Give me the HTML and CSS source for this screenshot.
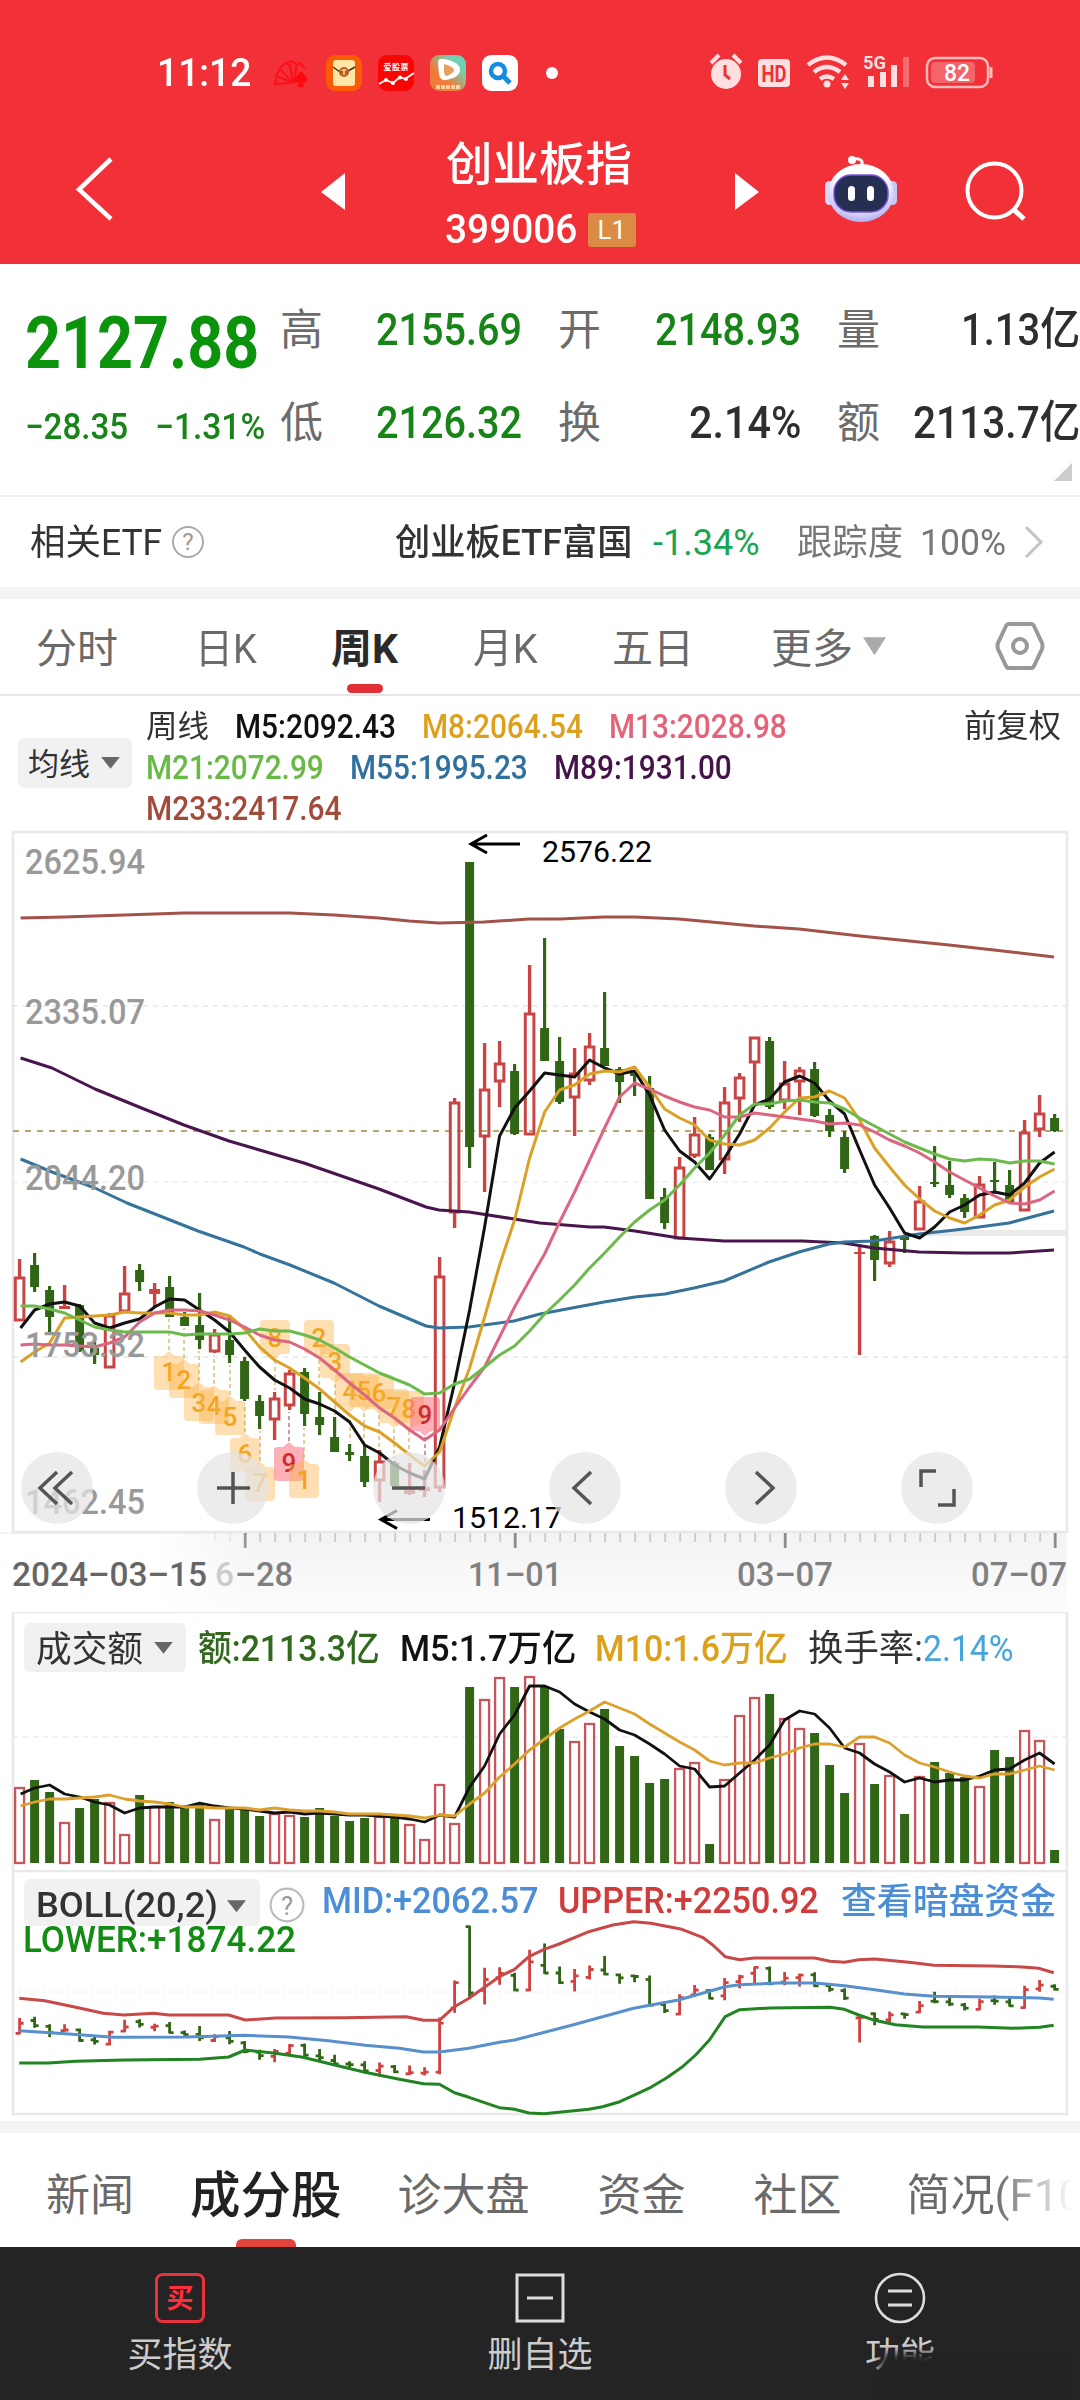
FILE: index.html
```html
<!DOCTYPE html>
<html lang="zh-CN">
<head>
<meta charset="utf-8">
<title>创业板指 399006</title>
<link rel="stylesheet" href="styles.css">
</head>
<body>
<div class="app">
  <header class="top">
    <div class="status">
      <span class="clock" data-w="94">11:12</span>
      <svg class="apps" width="290" height="40" viewBox="270 53 290 40">
        <g fill="none" stroke="#fb1119" stroke-width="2.200" stroke-linejoin="round">
          <path d="M293 83L275 84l1-6M293 83L276 76l4-7 13 14M280 68l5-5 5 2 3 18 4-18-5-4-6 2M297 65l3-2 5 5"/>
        </g>
        <path d="M301 71c6 6 8 9 5 11q-2 2-4 0l2 5h-7l2-5q-3 2-5 0c-2-3 2-5 7-11z" fill="#fa0a10"/>
        <rect x="326" y="55" width="36" height="36" rx="9" fill="#fb5a08"/>
        <rect x="333" y="60" width="22" height="26" rx="3" fill="#ffe5a6"/>
        <path d="M333 67l10 7 12-7" fill="none" stroke="#4c3113" stroke-width="1.500"/>
        <circle cx="344" cy="72" r="5" fill="#b5602a"/><path d="M341.500 70h5M344 70v5" stroke="#ffd07a" stroke-width="1.500"/>
        <rect x="378" y="55" width="36" height="36" rx="9" fill="#f80606"/>
        <text x="396" y="69.500" class="tiny" text-anchor="middle" textLength="25">爱股票</text>
        <path d="M379 84l7-4 7 3 7-6 5 2 9-6" fill="none" stroke="#fff" stroke-width="1.800"/>
        <g fill="#fff"><circle cx="386" cy="80" r="2"/><circle cx="393" cy="83" r="2"/><circle cx="400" cy="77.500" r="2"/><circle cx="406" cy="79" r="2"/></g>
        <defs><linearGradient id="play" x1="0" y1="1" x2="1" y2="0"><stop offset=".35" stop-color="#f27938"/><stop offset=".75" stop-color="#6fd1b4"/></linearGradient></defs>
        <rect x="430" y="55" width="36" height="36" rx="9" fill="url(#play)"/>
        <path d="M438 63q0-5 6-4 16 3 16 11 0 7-14 10-6 1-7-6z" fill="#fff"/>
        <path d="M444 64q10 3 10 6 0 3-7 6-3 0-3-5z" fill="#e5a060"/>
        <path d="M436 87h25" stroke="#ffd0a0" stroke-width="4" stroke-dasharray="4 1"/>
        <rect x="482" y="55" width="36" height="36" rx="9" fill="#fff"/>
        <circle cx="498" cy="71" r="7" fill="none" stroke="#168be0" stroke-width="4.500"/>
        <path d="M503 76l7 7" stroke="#168be0" stroke-width="5"/>
        <circle cx="552" cy="73" r="6" fill="#fff"/>
      </svg>
      <svg class="sys" width="290" height="40" viewBox="706 53 290 40">
        <g fill="#ffdfe0">
          <circle cx="726" cy="74" r="15"/>
          <path d="M711 63l8-8M741 63l-8-8" stroke="#ffdfe0" stroke-width="4"/>
          <path d="M725 65v10l5 4" fill="none" stroke="#f13037" stroke-width="3"/>
          <rect x="758" y="59" width="32" height="28" rx="4"/>
          <text x="774" y="81.500" class="hd" text-anchor="middle" textLength="25" lengthAdjust="spacingAndGlyphs">HD</text>
          <g fill="none" stroke="#ffdfe0" stroke-width="4.500"><path d="M808 65q19-15 38 0M814 72q13-10 26 0M820 79q7-5 14 0"/></g>
          <circle cx="827" cy="84" r="3.500"/>
          <path d="M841 80l4-6 4 6zM841 83l4 6 4-6z"/>
          <text x="863" y="69" class="g5" textLength="23" lengthAdjust="spacingAndGlyphs">5G</text>
          <rect x="868" y="76" width="6" height="11"/><rect x="880" y="72" width="6" height="15"/><rect x="891" y="65" width="6" height="22"/><rect x="903" y="57" width="6" height="30" opacity=".35"/>
          <rect x="927" y="58" width="61" height="29" rx="8" fill="none" stroke="#ffb9bb" stroke-width="2.500"/>
          <rect x="931" y="62" width="44" height="21" rx="4" opacity=".3"/>
          <path d="M991 67v11" stroke="#ffb9bb" stroke-width="3"/>
          <text x="944" y="81" class="bat" textLength="26" lengthAdjust="spacingAndGlyphs">82</text>
        </g>
      </svg>
    </div>
    <div class="nav">
      <svg class="back" width="40" height="68" viewBox="75 155 40 68"><path d="M111 159L79 189.500 111 219" fill="none" stroke="#fff" stroke-width="4.500"/></svg>
      <svg class="prev" width="25" height="38" viewBox="0 0 25 38"><path d="M0 19L24 0V37z" fill="#fff"/></svg>
      <div class="title">
        <h1 data-w="186">创业板指</h1>
        <div class="code"><span data-w="132">399006</span><i class="badge"><b data-w="29">L1</b></i></div>
      </div>
      <svg class="next" width="25" height="38" viewBox="0 0 25 38"><path d="M24 19L0 0V37z" fill="#fff"/></svg>
      <svg class="robot" width="74" height="70" viewBox="824 154 74 70">
        <defs><radialGradient id="head" cx=".5" cy=".35" r=".62"><stop offset=".6" stop-color="#fff"/><stop offset="1" stop-color="#b9b6f2"/></radialGradient></defs>
        <path d="M861 166c3-5 0-8-8-7" fill="none" stroke="#fff" stroke-width="3"/><circle cx="852" cy="160" r="4" fill="#fff"/>
        <rect x="825" y="181" width="9" height="24" rx="4.500" fill="#d5d9fb"/><rect x="888" y="181" width="9" height="24" rx="4.500" fill="#c5c9fa"/>
        <ellipse cx="861" cy="193" rx="33" ry="29" fill="url(#head)"/>
        <rect x="834" y="175" width="54" height="37" rx="17" fill="#242f52" stroke="#7a52e0" stroke-width="1.500"/>
        <rect x="848" y="186" width="7" height="15" rx="3.500" fill="#fff"/><rect x="867" y="186" width="7" height="15" rx="3.500" fill="#fff"/>
      </svg>
      <svg class="search" width="62" height="62" viewBox="965 160 62 62"><circle cx="994.500" cy="190.500" r="27" fill="none" stroke="#fff" stroke-width="4"/><path d="M1013 209l11 10" stroke="#fff" stroke-width="5"/></svg>
    </div>
  </header>

  <section class="quote">
    <div class="last">
      <div class="price"><span data-w="234">2127.88</span></div>
      <div class="chg"><span data-w="103">−28.35</span><span data-w="110">−1.31%</span></div>
    </div>
    <dl class="stats">
      <dt>高</dt><dd class="dn"><span data-w="146">2155.69</span></dd>
      <dt>开</dt><dd class="dn"><span data-w="146">2148.93</span></dd>
      <dt>量</dt><dd><span data-w="119">1.13亿</span></dd>
      <dt>低</dt><dd class="dn"><span data-w="146">2126.32</span></dd>
      <dt>换</dt><dd><span data-w="112">2.14%</span></dd>
      <dt>额</dt><dd><span data-w="167">2113.7亿</span></dd>
    </dl>
    <i class="corner"></i>
  </section>

  <section class="etf">
    <span data-w="132">相关ETF</span>
    <svg class="help" width="34" height="34" viewBox="0 0 34 34"><circle cx="17" cy="17" r="15" fill="none" stroke="#aaa" stroke-width="2"/><text x="17" y="25" text-anchor="middle" class="q">?</text></svg>
    <strong data-w="237">创业板ETF富国</strong>
    <span class="pct" data-w="107">-1.34%</span>
    <span class="track" data-w="106">跟踪度</span>
    <span class="full" data-w="86">100%</span>
    <svg class="go" width="20" height="34" viewBox="0 0 20 34"><path d="M2 2l15 15L2 32" fill="none" stroke="#c4c4c4" stroke-width="3"/></svg>
  </section>

  <nav class="periods">
    <span>分时</span><span data-w="62">日K</span><b data-w="67">周K</b><span data-w="65">月K</span><span>五日</span><span class="more">更多</span>
    <i class="tri lite"></i>
    <svg width="50" height="48" viewBox="0 0 50 48"><path d="M14 2h22q2 0 3 2l8 17q1 3 0 6l-8 17q-1 2-3 2H14q-2 0-3-2L3 27q-1-3 0-6l8-17q1-2 3-2z" fill="none" stroke="#999" stroke-width="4"/><circle cx="25" cy="24" r="7" fill="none" stroke="#999" stroke-width="4"/></svg>
  </nav>

  <section class="legend">
    <div class="pick"><span data-w="62">均线</span><i class="tri"></i></div>
    <div class="mas">
      <div><span data-w="63">周线</span><span class="k" data-w="161">M5:2092.43</span><span class="o" data-w="161">M8:2064.54</span><span class="p" data-w="178">M13:2028.98</span></div>
      <div><span class="g" data-w="178">M21:2072.99</span><span class="b" data-w="178">M55:1995.23</span><span class="v" data-w="178">M89:1931.00</span></div>
      <div><span class="r" data-w="196">M233:2417.64</span></div>
    </div>
    <span class="adj" data-w="97">前复权</span>
  </section>

  <section class="kline">
    <svg id="kline" width="1080" height="782" viewBox="0 830 1080 782"></svg>
    <div class="tools">
      <button><svg viewBox="0 0 72 72"><path d="M36 20L19 36l17 16M51 20L34 36l17 16"/></svg></button>
      <button><svg viewBox="0 0 72 72"><path d="M36 20v32M20 36h33"/></svg></button>
      <button><svg viewBox="0 0 72 72"><path d="M19 36h33"/></svg></button>
      <button><svg viewBox="0 0 72 72"><path d="M42 20L25 36l17 16"/></svg></button>
      <button><svg viewBox="0 0 72 72"><path d="M31 20l17 16-17 16"/></svg></button>
      <button><svg viewBox="0 0 72 72"><path d="M20 35V19h15M37 53h16V37"/></svg></button>
    </div>
  </section>

  <section class="panel vol">
    <svg id="vol" class="plot" width="1080" height="258" viewBox="0 1612 1080 258"></svg>
    <div class="phead">
      <div class="pick"><span data-w="107">成交额</span><i class="tri"></i></div>
      <span class="dg" data-w="182">额:2113.3亿</span><span class="k" data-w="176">M5:1.7万亿</span><span class="o" data-w="193">M10:1.6万亿</span><span class="turn"><span data-w="115">换手率:</span><span class="sky" data-w="91">2.14%</span></span>
    </div>
  </section>

  <section class="panel boll">
    <svg id="boll" class="plot" width="1080" height="251" viewBox="0 1870 1080 251"></svg>
    <div class="bhead">
      <div class="pick"><span data-w="182">BOLL(20,2)</span><i class="tri"></i></div>
      <svg class="help" width="36" height="36" viewBox="0 0 34 34"><circle cx="17" cy="17" r="15.500" fill="none" stroke="#bbb" stroke-width="2"/><text x="17" y="26" text-anchor="middle" class="q">?</text></svg>
      <span class="mid" data-w="216">MID:+2062.57</span><span class="up" data-w="261">UPPER:+2250.92</span><span class="mid cn" data-w="215">查看暗盘资金</span>
    </div>
    <div class="low"><span data-w="273">LOWER:+1874.22</span></div>
  </section>

  <nav class="tabs">
    <span>新闻</span><b>成分股</b><span>诊大盘</span><span>资金</span><span>社区</span><span class="fade">简况(F10)</span>
  </nav>

  <footer class="bar">
    <div class="buy"><svg width="50" height="50" viewBox="0 0 50 50"><rect x="1.500" y="1.500" width="47" height="47" rx="6" fill="none" stroke="#e8323c" stroke-width="3"/><text x="25" y="35" text-anchor="middle" class="mai">买</text></svg><span>买指数</span></div>
    <div><svg width="50" height="50" viewBox="0 0 50 50"><path d="M2 2h46v46H2zM12 25h26" fill="none" stroke="#ddd" stroke-width="3"/></svg><span>删自选</span></div>
    <div class="fn"><svg width="52" height="52" viewBox="0 0 52 52"><circle cx="26" cy="26" r="24" fill="none" stroke="#ddd" stroke-width="2.600"/><path d="M14 19h24M14 33h24" stroke="#ddd" stroke-width="3"/></svg><span>功能</span><i class="smudge"></i></div>
  </footer>
</div>
<script src="charts.js"></script>
</body>
</html>
```
FILE: styles.css
```css
* { box-sizing: border-box; }
body { margin: 0; background: #fff; font-family: Roboto, "Noto Sans CJK SC", sans-serif; color: #333; }
.app { width: 1080px; height: 2400px; overflow: hidden; display: flex; flex-direction: column; }
i { font-style: normal; }
svg { display: block; flex: none; }
[data-w] { display: inline-block; white-space: nowrap; }
.squeeze { display: inline-block; transform-origin: 0 50%; white-space: nowrap; }

.top { height: 264px; background: #f13037; color: #fff; }
.status { height: 124px; padding: 53px 84px 0 157px; display: flex; align-items: flex-start; }
.clock { font-size: 38px; line-height: 40px; font-weight: 500; }
.apps { margin-left: 19px; }
.sys { margin-left: auto; }
.tiny { font: 700 8px "Noto Sans CJK SC", sans-serif; fill: #fff; }
.hd { font: 700 23px Roboto, sans-serif; fill: #f13037; }
.g5 { font: 700 18px Roboto, sans-serif; }
.bat { font: 500 24px Roboto, sans-serif; fill: #fff; }
.nav { height: 140px; padding-left: 75px; display: flex; align-items: flex-start; }
.back { margin-top: 31px; }
.prev { margin: 49px 0 0 206px; }
.title { margin: 12px 0 0 100px; width: 190px; }
.title h1 { margin: 0; font-size: 46px; line-height: 56px; font-weight: 500; }
.code { display: flex; align-items: center; gap: 11px; margin: 15px 0 0 -1px; font-size: 40px; line-height: 46px; font-weight: 500; white-space: nowrap; }
.badge { background: #dc8b45; width: 48px; height: 34px; display: flex; justify-content: center; align-items: center; font-size: 26px; line-height: 34px; border-radius: 3px; }
.badge b { font-weight: 400; }
.next { margin: 49px 0 0 99px; }
.robot { margin: 30px 0 0 64px; }
.search { margin: 36px 0 0 67px; }

.quote { height: 233px; display: flex; position: relative; border-bottom: 2px solid #eee; }
.last { width: 281px; padding: 40px 0 0 25px; color: #0c930c; }
.price { font-size: 73px; line-height: 78px; font-weight: 700; }
.chg { display: flex; gap: 27px; margin-top: 24px; font-size: 36px; line-height: 42px; font-weight: 500; color: #178417; }
.stats { margin: 37px 0 0; width: 799px; display: grid; grid-template-columns: 43px 198px 81px 198px 80px 199px; grid-template-rows: 58px 58px; row-gap: 35px; }
.stats dt { font-size: 43px; line-height: 58px; color: #6c6c6c; white-space: nowrap; margin-left: -1px; }
.stats dt:nth-of-type(3n+2) { padding-left: 37px; }
.stats dt:nth-of-type(3n) { padding-left: 37px; }
.stats dd { margin: 0; font-size: 45px; line-height: 58px; font-weight: 500; color: #2e2e2e; text-align: right; }
.stats .dn { color: #178417; }
.corner { position: absolute; right: 8px; bottom: 14px; border-left: 18px solid transparent; border-bottom: 18px solid #ccc; }

.etf { height: 90px; padding: 3px 31px 0 30px; display: flex; align-items: center; font-size: 36px; line-height: 50px; }
.help { margin-left: 9px; margin-top: -3px; }
.q { font: 24px Roboto, sans-serif; fill: #999; }
.etf strong { margin-left: 190px; font-weight: 500; }
.pct { margin-left: 21px; color: #17a552; }
.track { margin-left: 37px; color: #777; }
.full { margin-left: 17px; color: #777; }
.go { margin: -3px 0 0 18px; }

.periods { height: 109px; border-top: 12px solid #f4f4f4; border-bottom: 2px solid #e6e6e6; padding-left: 36px; display: flex; align-items: center; font-size: 41px; line-height: 60px; color: #6a6a6a; }
.periods > span, .periods > b { white-space: nowrap; margin-top: 5px; }
.periods > :nth-child(2) { margin-left: 77px; }
.periods > :nth-child(3) { margin-left: 74px; color: #2a2a2a; font-weight: 700; position: relative; }
.periods > :nth-child(3)::after { content: ""; position: absolute; left: 16px; bottom: -14px; width: 36px; height: 9px; border-radius: 5px; background: #e03036; }
.periods > :nth-child(4) { margin-left: 75px; }
.periods > :nth-child(5) { margin-left: 74px; }
.periods > .more { margin-left: 77px; }
.periods svg { margin-left: 109px; }
.tri { width: 19px; height: 12px; background: #666; clip-path: polygon(0 0, 100% 0, 50% 100%); flex: none; }
.tri.lite { width: 23px; height: 18px; background: #aaa; margin-left: 10px; }

.legend { height: 134px; padding: 10px 19px 0 18px; display: flex; align-items: flex-start; font-size: 33px; line-height: 41px; }
.pick { background: #f1f1f1; border-radius: 6px; display: flex; align-items: center; }
.legend .pick { width: 114px; height: 50px; margin-top: 32px; padding-left: 10px; gap: 11px; font-size: 31px; }
.legend .pick span { margin-top: 3px; }
.mas { margin-left: 14px; font-weight: 500; }
.mas div { display: flex; gap: 26px; height: 41px; }
.mas div:first-child > span:first-child { font-size: 31px; font-weight: 400; }
.k { color: #111; } .o { color: #dda01d; } .p { color: #e2637a; } .g { color: #68b946; }
.b { color: #2f709f; } .v { color: #46124a; } .r { color: #a34b3b; }
.adj { margin-left: auto; font-size: 32px; }

.kline { height: 783px; position: relative; }
.tools { position: absolute; left: 21px; top: 622px; display: flex; gap: 104px; }
.tools button { width: 72px; height: 72px; padding: 0; border: 0; border-radius: 50%; background: rgba(228, 228, 228, .72); }
.tools svg { width: 72px; height: 72px; fill: none; stroke: #555; stroke-width: 3.500; }
svg text.ax { font: 500 35px Roboto, sans-serif; fill: #999; }
svg text.date { font: 500 34px Roboto, sans-serif; fill: #808080; }
svg text.start { fill: #666; }
svg text.ghost { fill: #ccc; }
svg text.mark { font: 29px Roboto, sans-serif; fill: #000; }
svg text.td { font: 500 26px Roboto, sans-serif; text-anchor: middle; }

.panel { position: relative; }
.plot { position: absolute; left: 0; top: 0; }
.vol { height: 258px; }
.phead { position: relative; display: flex; align-items: center; padding: 10px 0 0 24px; font-size: 36px; line-height: 48px; font-weight: 500; }
.phead .pick { width: 162px; height: 49px; padding-left: 12px; gap: 11px; margin-right: 12px; font-weight: 400; }
.phead .pick span { margin-top: 4px; }
.phead > span { margin: 3px 20px 0 0; }
.phead > span:nth-child(3) { margin-right: 19px; }
.turn { display: flex; gap: 0; }
.turn span:first-child { font-weight: 400; }
.dg { color: #33691e; } .sky { color: #46a5da; }
.boll { height: 251px; }
.bhead { position: relative; display: flex; align-items: flex-start; padding: 9px 0 0 24px; font-size: 36px; line-height: 44px; font-weight: 500; }
.bhead .pick { width: 236px; height: 47px; padding: 7px 0 0 12px; gap: 9px; font-size: 35px; }
.bhead .help { margin: 8px 17px 0 9px; }
.bhead .up { margin-left: 20px; color: #d03c3c; }
.mid { color: #4b8ed6; }
.bhead .cn { margin: 1px 0 0 22px; }
.low { position: relative; padding-left: 23px; font-size: 36px; line-height: 42px; font-weight: 500; color: #128c12; margin-top: -7px; }

.tabs { height: 126px; border-top: 12px solid #f4f4f4; padding: 11px 0 0 46px; display: flex; align-items: center; font-size: 44px; line-height: 66px; color: #6a6a6a; white-space: nowrap; }
.tabs b { margin: 0 56px; font-size: 50.500px; font-weight: 500; color: #222; position: relative; }
.tabs b::after { content: ""; position: absolute; left: 46px; bottom: -18px; width: 60px; height: 8px; border-radius: 6px 6px 0 0; background: #e2443c; }
.tabs span + span { margin-left: 68px; }
.tabs .fade { background: linear-gradient(90deg, #6a6a6a 50%, #fff 96%); -webkit-background-clip: text; background-clip: text; color: transparent; width: 173px; overflow: hidden; margin-left: 65px; }
.bar { height: 153px; background: #242424; color: #ccc; display: flex; font-size: 35px; line-height: 50px; }
.bar div { flex: 1; display: flex; flex-direction: column; align-items: center; padding-top: 26px; position: relative; }
.bar span { margin-top: 8px; }
.bar .fn { padding-top: 25px; }
.bar .fn span { margin-top: 7px; }
.mai { font: 700 27px "Noto Sans CJK SC", sans-serif; fill: #ff2f3d; }
.smudge { position: absolute; left: 158px; top: 106px; width: 190px; height: 46px; background: #222; filter: blur(4px); transform: skewX(-8deg); }
```
FILE: charts.js
```js
// Squeeze each labelled run of text to its column width.
document.querySelectorAll('[data-w]').forEach(el => {
  const inner = document.createElement('span');
  inner.className = 'squeeze';
  inner.style.margin = '0';
  inner.textContent = el.textContent;
  el.textContent = '';
  el.appendChild(inner);
  const w = +el.dataset.w;
  inner.style.transform = `scaleX(${w / inner.offsetWidth})`;
  el.style.width = w + 'px';
  el.style.flex = 'none';
  el.style.textAlign = 'left';
});

const RED = '#c94545', GREEN = '#306615';
const X = i => 19.6 + 15 * i;

// up/down, high, body top, body bottom, low
const bars = `R 1259 1277 1320 1320;G 1253 1265 1287 1292;G 1286 1290 1317 1332;R 1285 1306 1309 1309;G 1304 1305 1351 1352
G 1340 1348 1355 1364;R 1313 1315 1367 1367;R 1266 1293 1311 1311;G 1264 1270 1282 1291;R 1283 1289 1294 1307
G 1276 1287 1317 1317;G 1312 1317 1326 1326;G 1293 1325 1340 1349;R 1329 1334 1351 1353;G 1315 1340 1355 1363
G 1357 1361 1399 1401;G 1395 1401 1416 1429;R 1392 1398 1419 1440;R 1370 1373 1405 1410;G 1368 1372 1414 1426
G 1392 1417 1425 1435;G 1417 1437 1452 1452;G 1444 1452 1455 1461;G 1445 1456 1482 1487;R 1450 1461 1480 1502
G 1461 1463 1486 1486;R 1463 1489 1494 1495;R 1470 1487 1491 1497;R 1257 1276 1487 1492;R 1098 1102 1212 1228
G 862 862 1147 1168;R 1043 1089 1136 1192;R 1041 1063 1081 1107;G 1064 1071 1134 1135;R 965 1013 1134 1134
G 938 1028 1061 1061;G 1037 1061 1102 1104;R 1048 1073 1097 1136;R 1033 1046 1080 1085;G 992 1048 1066 1066
G 1067 1069 1082 1103;G 1073 1073 1076 1096;G 1076 1088 1199 1199;G 1188 1197 1223 1229;R 1157 1167 1238 1238
R 1117 1134 1155 1158;G 1134 1137 1170 1170;R 1087 1102 1159 1174;R 1073 1077 1098 1122;R 1037 1037 1062 1103
G 1037 1041 1107 1109;R 1061 1083 1100 1109;R 1067 1070 1081 1115;G 1062 1069 1116 1117;G 1109 1115 1131 1137
G 1131 1137 1169 1173;R 1245 1252 1254 1355;G 1235 1236 1260 1281;R 1231 1241 1263 1267;G 1236 1237 1240 1253
R 1186 1201 1229 1229;G 1146 1182 1184 1187;G 1161 1185 1195 1198;G 1194 1198 1212 1218;R 1176 1184 1217 1217
G 1162 1180 1182 1193;G 1170 1185 1202 1202;R 1120 1132 1210 1210;R 1095 1113 1129 1137;G 1114 1118 1131 1132`
  .split(/[;\n]/).map(s => { const p = s.trim().split(' '); return [p[0], ...p.slice(1).map(Number)]; });

const ma = {
  m21: [1306,1306,1309,1313,1320,1327,1330,1332,1332,1332,1332,1335,1334,1334,1334,1333,1329,1331,1331,1335,1340,1348,1357,1365,1373,1379,1385,1394,1393,1384,1379,1367,1355,1346,1331,1314,1300,1285,1268,1253,1237,1222,1210,1200,1185,1168,1153,1135,1115,1104,1104,1101,1100,1102,1103,1109,1118,1126,1134,1142,1148,1154,1159,1161,1159,1160,1163,1161,1161,1164],
  m13: [1345,1344,1345,1345,1346,1347,1343,1337,1322,1313,1310,1310,1311,1315,1320,1327,1335,1340,1342,1349,1358,1370,1383,1395,1408,1418,1430,1440,1430,1408,1387,1367,1337,1307,1280,1254,1222,1192,1160,1128,1097,1083,1089,1096,1102,1107,1110,1117,1117,1113,1115,1117,1119,1121,1124,1123,1125,1132,1140,1146,1153,1162,1172,1180,1188,1196,1203,1204,1200,1191],
  m8: [1362,1352,1343,1318,1317,1316,1315,1312,1313,1313,1313,1315,1315,1312,1316,1329,1347,1360,1368,1378,1389,1402,1415,1426,1432,1443,1455,1466,1452,1408,1368,1317,1265,1220,1158,1112,1090,1085,1074,1071,1072,1067,1087,1109,1118,1125,1140,1144,1145,1140,1128,1112,1098,1097,1091,1098,1120,1148,1167,1185,1199,1211,1218,1223,1215,1205,1200,1187,1177,1169],
  m5: [1328,1310,1304,1302,1306,1323,1328,1323,1319,1307,1299,1300,1310,1320,1332,1350,1367,1380,1388,1399,1404,1411,1422,1445,1453,1465,1473,1479,1447,1383,1310,1227,1136,1108,1091,1073,1075,1077,1060,1068,1074,1071,1095,1130,1151,1162,1179,1158,1134,1105,1099,1082,1076,1083,1101,1114,1150,1185,1208,1233,1238,1227,1212,1205,1195,1192,1195,1183,1163,1152]
};
const m55 = '20.6,1159 52,1172 95,1188 127,1203 198,1231 244,1247 260,1254 290,1265 334,1283 379,1306 426,1326 439,1328 469,1327 514,1321 540,1314 604,1302 635,1297 665,1294 694,1288 724,1281 769,1262 799,1252 829,1244 844,1242 874,1241 919,1234 964,1229 1009,1223 1054,1211';
const m89 = '20.6,1058 52,1068 95,1089 139,1107 184,1125 229,1141 304,1163 379,1189 426,1207 439,1210 469,1212 514,1219 540,1223 590,1227 604,1227 635,1231 679,1238 724,1241 802,1241 844,1243 874,1248 919,1252 964,1253 1009,1253 1054,1250';
const m233 = '20.6,918 64,917 184,913 290,913 334,915 379,918 409,921 439,923 484,922 529,919 560,919 604,917 635,917 679,919 754,926 799,929 860,936 949,945 994,950 1054,957';

const line = (pts, c, w = 3) => `<polyline points="${pts}" fill="none" stroke="${c}" stroke-width="${w}" stroke-linejoin="round"/>`;
const series = (a, c, w) => line(a.map((y, i) => `${X(i) + (i ? 0 : 1)},${y}`).join(' '), c, w);
const dash = (y, c, d = '5 5', w = 1) => `<path d="M13 ${y}H1066" stroke="${c}" stroke-width="${w}" stroke-dasharray="${d}"/>`;

let k = '<defs><linearGradient id="ax" x1="0" x2="0" y1="0" y2="1"><stop offset="0" stop-color="#f3f3f3"/><stop offset="1" stop-color="#fcfcfc"/></linearGradient>' +
  '<linearGradient id="wl" x1="0" x2="1"><stop offset="0" stop-color="#fff"/><stop offset=".6" stop-color="#fff"/><stop offset="1" stop-color="#fff" stop-opacity="0"/></linearGradient></defs>';
k += '<rect x="0" y="1532" width="1067" height="80" fill="url(#ax)"/>';
k += '<rect x="13" y="832" width="1054" height="700" fill="#fff" stroke="#e9e9e9" stroke-width="2.600"/>';
k += dash(1006, '#d9d9d9') + dash(1182, '#e4e4e4') + dash(1357, '#d9d9d9');
k += '<path d="M925 1233H1067" stroke="#eaeaea" stroke-width="6"/>';
k += dash(1131, '#b9a773', '6 6', 2);
bars.forEach(([t, h, a, b, l], i) => {
  const x = X(i), c = t === 'R' ? RED : GREEN;
  if (t === 'R') {
    if (h < a) k += `<path d="M${x} ${h}V${a}" stroke="${c}" stroke-width="3.400"/>`;
    if (l > b) k += `<path d="M${x} ${b}V${l}" stroke="${c}" stroke-width="3.400"/>`;
    k += b - a > 6 ? `<rect x="${x - 4.3}" y="${a + 1}" width="8.600" height="${b - a - 1}" fill="none" stroke="${c}" stroke-width="3"/>`
                   : `<rect x="${x - 5.5}" y="${a}" width="11" height="${b - a}" fill="${c}"/>`;
  } else {
    k += `<path d="M${x} ${h}V${l}" stroke="${c}" stroke-width="3.200"/><rect x="${x - 4.5}" y="${a}" width="9" height="${b - a}" fill="${c}"/>`;
  }
});
k += line(m233, '#a4514a') + line(m89, '#48154c') + line(m55, '#35739a');

// Sequential count badges: digit, x, y, side of the pointer, candle edge
[[1,169,1372,'u',1317],[2,184,1380,'u',1326],[3,199,1403,'u',1349],[4,214,1406,'u',1353],[5,230,1417,'u',1363],[6,245,1454,'u',1401],[7,260,1483,'u',1429],[8,275,1338,'d',1392],[9,289,1463,'u',1410],[1,304,1480,'u',1426],[2,319,1338,'d',1392],[3,335,1362,'d',1417],[4,350,1391,'d',1444],[5,364,1391,'d',1445],[6,379,1393,'d',1450],[7,394,1407,'d',1461],[8,409,1409,'d',1463],[9,425,1415,'d',1470]]
.forEach(([n, x, y, s, e]) => {
  const hot = n === 9, c = hot ? '#f7717c' : '#fbb348';
  const q = s === 'u' ? 1 : -1;
  k += `<g transform="translate(${x} ${y})"><path transform="scale(1 ${q})" d="M-15 -13q0-3 4-3h5L0-21l6 5h5q4 0 4 3V14q0 4-4 4H-11q-4 0-4-4z" fill="${c}" opacity="${hot ? .55 : .42}"/></g>`;
  k += `<path d="M${x} ${y - q * 22}V${e + q * 2}" stroke="${hot ? '#8e3b3b' : '#c99a3c'}" stroke-width="1" stroke-dasharray="4 3"/>`;
  k += `<text class="td" x="${x}" y="${y + 9}" fill="${hot ? '#d02a2f' : '#f3a41f'}">${n}</text>`;
});
k += series(ma.m5, '#111') + series(ma.m8, '#dba126') + series(ma.m13, '#dc6580') + series(ma.m21, '#6cba4c');

[['2625.94', 874], ['2335.07', 1024], ['2044.20', 1190], ['1753.32', 1357], ['1462.45', 1514]].forEach(([t, y]) => {
  k += `<text class="ax" x="25" y="${y}" textLength="120" lengthAdjust="spacingAndGlyphs">${t}</text>`;
});
const arrow = (x, y) => `<path d="M${x + 51} ${y}H${x + 2}M${x + 18} ${y - 9}L${x + 2} ${y}l16 9" fill="none" stroke="#000" stroke-width="3"/>`;
k += arrow(469, 844) + arrow(379, 1519.5);
k += '<text class="mark" x="542" y="862" textLength="110" lengthAdjust="spacingAndGlyphs">2576.22</text><text class="mark" x="452" y="1528" textLength="110" lengthAdjust="spacingAndGlyphs">1512.17</text>';
for (let i = 13; i < 70; i++) {
  const major = (i - 15) % 18 === 0;
  k += `<path d="M${X(i) + .6} 1533V${major ? 1548 : 1542}" stroke="${major ? '#8c8c8c' : '#c9c9c9'}" stroke-width="${major ? 2.8 : 1.8}" opacity="${i < 15 ? .5 : 1}"/>`;
}
const date = (t, x, w, c = '') => `<text class="date ${c}" x="${x}" y="1586" textLength="${w}" lengthAdjust="spacingAndGlyphs">${t}</text>`;
k += '<rect x="0" y="1534" width="255" height="78" fill="url(#wl)"/>';
k += date('6', 215, 19, 'ghost') + date('–28', 235, 58);
k += date('2024–03–15', 12, 195, 'start') + date('11–01', 468, 94) + date('03–07', 737, 96) + date('07–07', 971, 96);
document.getElementById('kline').innerHTML = k;

const vol = [1787,1780,1792,1822,1808,1799,1802,1834,1795,1806,1802,1806,1804,1819,1809,1809,1816,1813,1815,1817,1808,1816,1821,1818,1816,1818,1824,1839,1784,1823,1687,1699,1677,1687,1676,1686,1729,1741,1723,1709,1746,1756,1783,1779,1768,1762,1844,1779,1715,1697,1694,1718,1728,1733,1765,1793,1743,1784,1775,1814,1776,1762,1773,1777,1786,1750,1757,1730,1740,1850];
const v5 = [1794,1788,1785,1794,1797,1802,1805,1813,1808,1807,1807,1807,1803,1806,1808,1809,1811,1813,1812,1814,1813,1814,1815,1815,1816,1817,1819,1822,1815,1817,1787,1766,1734,1715,1686,1686,1692,1704,1712,1719,1730,1735,1744,1754,1766,1769,1787,1786,1773,1760,1745,1720,1711,1714,1728,1748,1753,1764,1772,1782,1778,1782,1780,1780,1776,1770,1769,1760,1753,1764];
const v10 = [1806,1802,1799,1799,1798,1797,1795,1799,1801,1802,1804,1807,1807,1808,1808,1808,1810,1808,1810,1811,1811,1812,1814,1814,1814,1815,1816,1818,1815,1816,1804,1793,1777,1764,1750,1739,1728,1719,1711,1702,1708,1714,1724,1733,1742,1750,1761,1765,1763,1763,1758,1754,1748,1744,1744,1747,1737,1737,1743,1755,1763,1767,1772,1776,1778,1774,1774,1770,1766,1770];
let v = '<path d="M13 1870V1612H1067V1870" fill="#fff" stroke="#e9e9e9" stroke-width="2.600"/>' + dash(1737, '#e2e2e2');
vol.forEach((y, i) => {
  const x = X(i);
  v += bars[i][0] === 'R' ? `<rect x="${x - 4.5}" y="${y + 1}" width="9" height="${1862 - y}" fill="#fff" stroke="#c4565c" stroke-width="2.300"/>`
                          : `<rect x="${x - 4.5}" y="${y}" width="9" height="${1863 - y}" fill="${GREEN}"/>`;
});
v += series(v5, '#111', 2.8) + series(v10, '#dda02c', 2.8);
document.getElementById('vol').innerHTML = v;

let b = '<rect x="13" y="1871" width="1054" height="243" fill="#fff" stroke="#e9e9e9" stroke-width="2.600"/>' + dash(1992, '#e2e2e2', '2 4');
const B = y => 1926.7 + (y - 862) * .2327;
bars.forEach(([t, h, a, c, l], i) => {
  const x = X(i), up = t === 'R', o = B(up ? c : a), cl = B(up ? a : c);
  b += `<path d="M${x} ${B(h) - 1}V${B(l) + 1}M${x - 4} ${o}H${x}M${x} ${cl}H${x + 4}" stroke="${up ? '#d24040' : GREEN}" stroke-width="2.800"/>`;
});
const band = (s, c) => line(s.split(' ').map(p => { const [x, y] = p.split(','); return `${(x / 1.452).toFixed(1)},${(1860 + y / 3).toFixed(1)}`; }).join(' '), c, 3);
b += band('28,415 65,422 110,442 150,460 180,465 223,460 245,465 332,465 356,480 400,474 500,473 590,470 615,481 638,481 660,440 681,415 725,350 747,328 768,290 790,268 812,252 855,215 890,195 920,185 945,190 990,208 1020,232 1035,255 1053,290 1074,299 1095,294 1183,294 1205,304 1226,307 1247,299 1270,297 1320,307 1356,316 1440,318 1485,321 1508,325 1530,338', '#c94848');
b += band('28,512 100,522 165,532 270,531 356,526 420,531 480,543 530,556 580,565 615,576 638,576 681,565 725,547 747,540 830,496 920,445 985,420 1053,380 1074,374 1130,369 1183,369 1226,377 1270,389 1313,402 1356,409 1440,411 1510,414 1530,418', '#5790cc');
b += band('28,609 70,609 110,604 180,600 290,598 332,591 356,570 400,580 440,592 480,612 530,637 580,658 615,671 638,673 660,698 681,712 725,743 747,748 768,759 790,761 855,748 875,740 900,725 920,706 945,682 967,655 990,622 1010,585 1030,540 1053,470 1074,449 1118,444 1205,442 1226,448 1247,465 1270,481 1300,494 1340,501 1420,501 1470,505 1510,502 1530,496', '#218321');
document.getElementById('boll').innerHTML = b;
```
